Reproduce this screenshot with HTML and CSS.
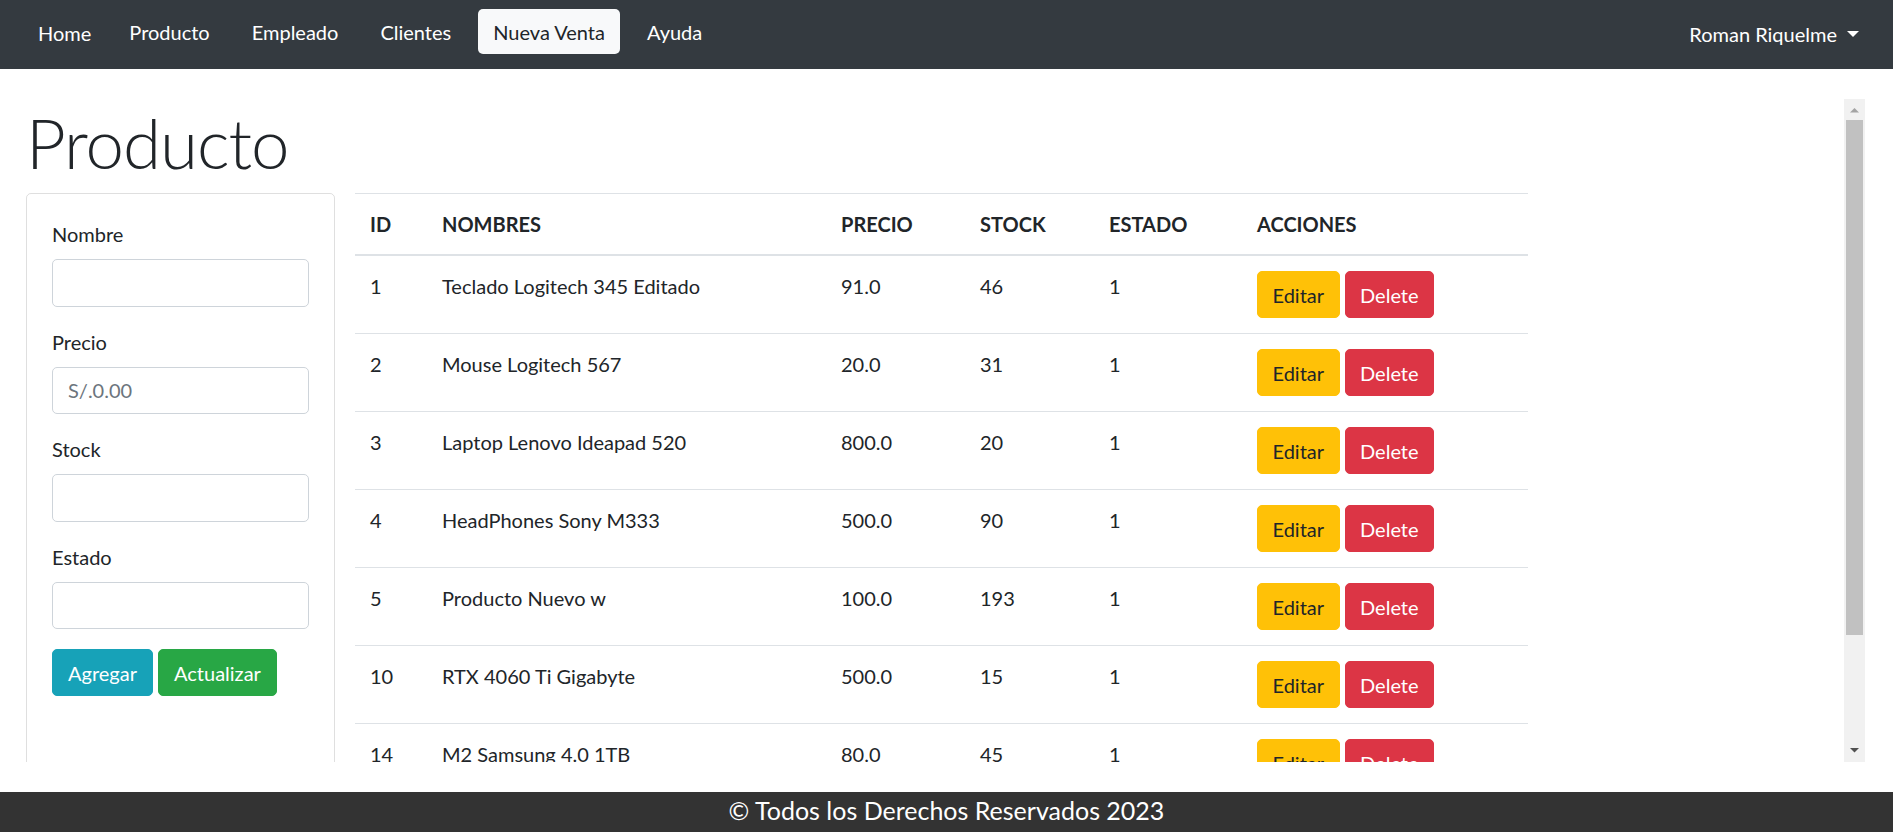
FILE: index.html
```html
<!DOCTYPE html>
<html lang="es">
<head>
<meta charset="utf-8">
<title>Producto</title>
<link rel="stylesheet" href="styles.css">
</head>
<body>
<nav class="navbar">
  <ul class="nav-list">
    <li><a class="nav-link nav-home" href="#">Home</a></li>
    <li><a class="nav-link" href="#">Producto</a></li>
    <li><a class="nav-link" href="#">Empleado</a></li>
    <li><a class="nav-link" href="#">Clientes</a></li>
    <li><a class="nav-link active" href="#">Nueva Venta</a></li>
    <li><a class="nav-link" href="#">Ayuda</a></li>
  </ul>
  <a class="user-toggle" href="#">Roman Riquelme<span class="caret"></span></a>
</nav>

<main class="frame">
  <div class="frame-viewport">
    <div class="frame-content">
      <h1 class="page-title">Producto</h1>
      <div class="content-row">
        <div class="card">
          <form class="card-body">
            <div class="form-group">
              <label class="form-label">Nombre</label>
              <input class="form-control" type="text">
            </div>
            <div class="form-group">
              <label class="form-label">Precio</label>
              <input class="form-control" type="text" placeholder="S/.0.00">
            </div>
            <div class="form-group">
              <label class="form-label">Stock</label>
              <input class="form-control" type="text">
            </div>
            <div class="form-group">
              <label class="form-label">Estado</label>
              <input class="form-control" type="text">
            </div>
            <div class="form-actions">
              <button class="btn btn-info" type="button">Agregar</button>
              <button class="btn btn-success" type="button">Actualizar</button>
            </div>
          </form>
        </div>
        <div class="table-wrap">
          <table class="table">
            <colgroup>
              <col class="c-id"><col class="c-name"><col class="c-price"><col class="c-stock"><col class="c-state"><col class="c-actions">
            </colgroup>
            <thead>
              <tr><th>ID</th><th>NOMBRES</th><th>PRECIO</th><th>STOCK</th><th>ESTADO</th><th>ACCIONES</th></tr>
            </thead>
            <tbody>
              <tr><td>1</td><td>Teclado Logitech 345 Editado</td><td>91.0</td><td>46</td><td>1</td><td><a class="btn btn-warning" href="#">Editar</a><a class="btn btn-danger" href="#">Delete</a></td></tr>
              <tr><td>2</td><td>Mouse Logitech 567</td><td>20.0</td><td>31</td><td>1</td><td><a class="btn btn-warning" href="#">Editar</a><a class="btn btn-danger" href="#">Delete</a></td></tr>
              <tr><td>3</td><td>Laptop Lenovo Ideapad 520</td><td>800.0</td><td>20</td><td>1</td><td><a class="btn btn-warning" href="#">Editar</a><a class="btn btn-danger" href="#">Delete</a></td></tr>
              <tr><td>4</td><td>HeadPhones Sony M333</td><td>500.0</td><td>90</td><td>1</td><td><a class="btn btn-warning" href="#">Editar</a><a class="btn btn-danger" href="#">Delete</a></td></tr>
              <tr><td>5</td><td>Producto Nuevo w</td><td>100.0</td><td>193</td><td>1</td><td><a class="btn btn-warning" href="#">Editar</a><a class="btn btn-danger" href="#">Delete</a></td></tr>
              <tr><td>10</td><td>RTX 4060 Ti Gigabyte</td><td>500.0</td><td>15</td><td>1</td><td><a class="btn btn-warning" href="#">Editar</a><a class="btn btn-danger" href="#">Delete</a></td></tr>
              <tr><td>14</td><td>M2 Samsung 4.0 1TB</td><td>80.0</td><td>45</td><td>1</td><td><a class="btn btn-warning" href="#">Editar</a><a class="btn btn-danger" href="#">Delete</a></td></tr>
            </tbody>
          </table>
        </div>
      </div>
    </div>
  </div>
  <div class="scrollbar" aria-hidden="true">
    <div class="sb-button">
      <svg width="21" height="21" viewBox="0 0 21 21"><polygon points="6,13.5 10.5,9 15,13.5" fill="#a3a3a3"/></svg>
    </div>
    <div class="sb-track"><div class="sb-thumb"></div></div>
    <div class="sb-button">
      <svg width="21" height="21" viewBox="0 0 21 21"><polygon points="6,7 15,7 10.5,11.5" fill="#505050"/></svg>
    </div>
  </div>
</main>

<footer class="footer">© Todos los Derechos Reservados 2023</footer>
</body>
</html>
```
FILE: styles.css
```css
* { box-sizing: border-box; }

html, body {
  margin: 0;
  height: 100%;
  overflow: hidden;
}

body {
  font-family: "Lato", "Open Sans", sans-serif;
  font-size: 20px;
  line-height: 30px;
  color: #212529;
  background: #fff;
}

/* ---------- navbar ---------- */
.navbar {
  height: 69px;
  background: #343a40;
  display: flex;
  justify-content: space-between;
  align-items: flex-start;
  padding: 9px 34px 0 23px;
}

.nav-list {
  list-style: none;
  margin: 0;
  padding: 0;
  display: flex;
  gap: 12px;
}

.nav-link {
  display: block;
  height: 45px;
  padding: 7.5px 15px;
  line-height: 30px;
  color: #fff;
  text-decoration: none;
  border-radius: 5px;
}

.nav-home {
  padding-top: 9px;
  margin-right: -4px;
}

.nav-link.active {
  background: #f8f9fa;
  color: #212529;
}

.user-toggle {
  display: block;
  padding-top: 10px;
  line-height: 30px;
  color: #fff;
  text-decoration: none;
}

.caret {
  display: inline-block;
  margin-left: 10px;
  vertical-align: 5px;
  border-top: 6px solid #fff;
  border-left: 6px solid transparent;
  border-right: 6px solid transparent;
}

/* ---------- framed, scrolled area ---------- */
.frame {
  display: flex;
  margin: 30px 28px 30px 0;
  height: 663px;
}

.frame-viewport {
  flex: 1;
  min-width: 0;
  overflow: hidden;
}

.scrollbar {
  width: 21px;
  flex: none;
  display: flex;
  flex-direction: column;
  background: #f1f1f1;
}

.sb-button {
  height: 21px;
  flex: none;
}

.sb-button svg {
  display: block;
}

.sb-track {
  flex: 1;
  padding: 0 2px;
}

.sb-thumb {
  height: 515px;
  background: #c1c1c1;
}

.frame-content {
  padding-left: 26px;
}

.page-title {
  margin: 0 0 8px;
  padding-top: 2px;
  font-size: 69px;
  line-height: 84px;
  font-weight: 300;
  letter-spacing: -1px;
  color: #212529;
}

.content-row {
  display: flex;
  gap: 20px;
  align-items: stretch;
}

/* ---------- card / form ---------- */
.card {
  width: 309px;
  flex: none;
  border: 1px solid rgba(0, 0, 0, 0.125);
  border-radius: 5px;
}

.card-body {
  margin: 0;
  padding: 25px;
}

.form-group {
  margin-bottom: 20px;
}

.form-label {
  display: block;
  margin-bottom: 10px;
}

.form-control {
  display: block;
  width: 100%;
  height: 47.5px;
  padding: 7.5px 15px;
  font-family: inherit;
  font-size: 20px;
  line-height: 30px;
  color: #495057;
  background: #fff;
  border: 1px solid #ced4da;
  border-radius: 5px;
}

.form-control::placeholder {
  color: #6c757d;
}

.form-actions {
  display: flex;
  gap: 5px;
}

/* ---------- buttons ---------- */
.btn {
  display: inline-block;
  height: 47px;
  padding: 7.5px 15px;
  font-family: inherit;
  font-size: 20px;
  line-height: 30px;
  border: 1px solid transparent;
  border-radius: 5px;
  text-decoration: none;
  cursor: pointer;
}

.btn-info { background: #17a2b8; border-color: #17a2b8; color: #fff; }
.btn-success { background: #28a745; border-color: #28a745; color: #fff; }
.btn-warning { background: #ffc107; border-color: #ffc107; color: #212529; padding: 7.5px 14.5px; }
.btn-danger { background: #dc3545; border-color: #dc3545; color: #fff; margin-left: 5px; padding: 7.5px 14.5px; }

/* ---------- table ---------- */
.table-wrap {
  width: 1173px;
  flex: none;
  padding-bottom: 97px;
}

.table {
  width: 100%;
  table-layout: fixed;
  border-collapse: collapse;
}

.c-id { width: 72px; }
.c-name { width: 399px; }
.c-price { width: 139px; }
.c-stock { width: 129px; }
.c-state { width: 148px; }
.c-actions { width: 286px; }

.table th,
.table td {
  padding: 15px;
  text-align: left;
  vertical-align: top;
  border-top: 1px solid #dee2e6;
  white-space: nowrap;
}

.table th {
  font-weight: 700;
  border-bottom: 2px solid #dee2e6;
}

/* ---------- footer ---------- */
.footer {
  height: 40px;
  background: #333;
  color: #fff;
  text-align: center;
  font-size: 25px;
  line-height: 37px;
}
```
